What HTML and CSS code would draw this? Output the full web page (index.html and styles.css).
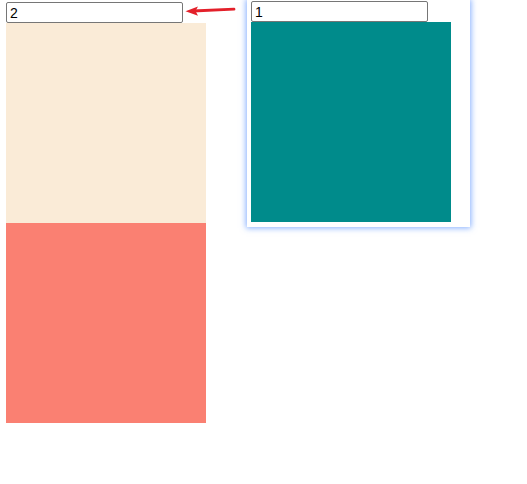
FILE: index.html
```html
<!DOCTYPE html>
<html>
<head>
<meta charset="utf-8">
<link rel="stylesheet" href="styles.css">
</head>
<body>
<div class="page">
  <div class="col">
    <input class="field" type="text" value="2">
    <div class="block beige"></div>
    <div class="block salmon"></div>
  </div>
  <svg class="arrow" width="64" height="22" viewBox="0 0 64 22">
    <path d="M51 9.2 L10 11" stroke="#e3202a" stroke-width="2.8" fill="none" stroke-linecap="round"/>
    <path d="M2.5 11.3 L15 6.5 L12.5 11 L15 15.8 Z" fill="#e3202a"/>
  </svg>
  <div class="panel">
    <input class="field" type="text" value="1">
    <div class="block teal"></div>
  </div>
</div>
</body>
</html>
```
FILE: styles.css
```css
html, body {
  margin: 0;
  padding: 0;
  background: #fff;
}
.page {
  display: flex;
  align-items: flex-start;
  font-family: "Liberation Sans", Arial, sans-serif;
}
.col {
  display: flex;
  flex-direction: column;
  margin-left: 6px;
  margin-top: 2px;
}
.field {
  box-sizing: border-box;
  width: 177px;
  height: 21px;
  margin: 0;
  padding: 1px 3px;
  border: 1px solid #767676;
  border-radius: 2px;
  font-family: "Liberation Sans", Arial, sans-serif;
  font-size: 14px;
  color: #000;
  background: #fff;
}
.block {
  width: 200px;
  height: 200px;
}
.beige { background: #faebd7; }
.salmon { background: #fa8072; }
.teal { background: #008b8b; }
.arrow {
  display: block;
  flex: none;
  margin-left: -23px;
}
.panel {
  display: flex;
  flex-direction: column;
  width: 200px;
  padding: 1px 19px 5px 4px;
  background: #fff;
  box-shadow: 0 0 6px 1px rgba(50, 120, 255, 0.6);
}
```
